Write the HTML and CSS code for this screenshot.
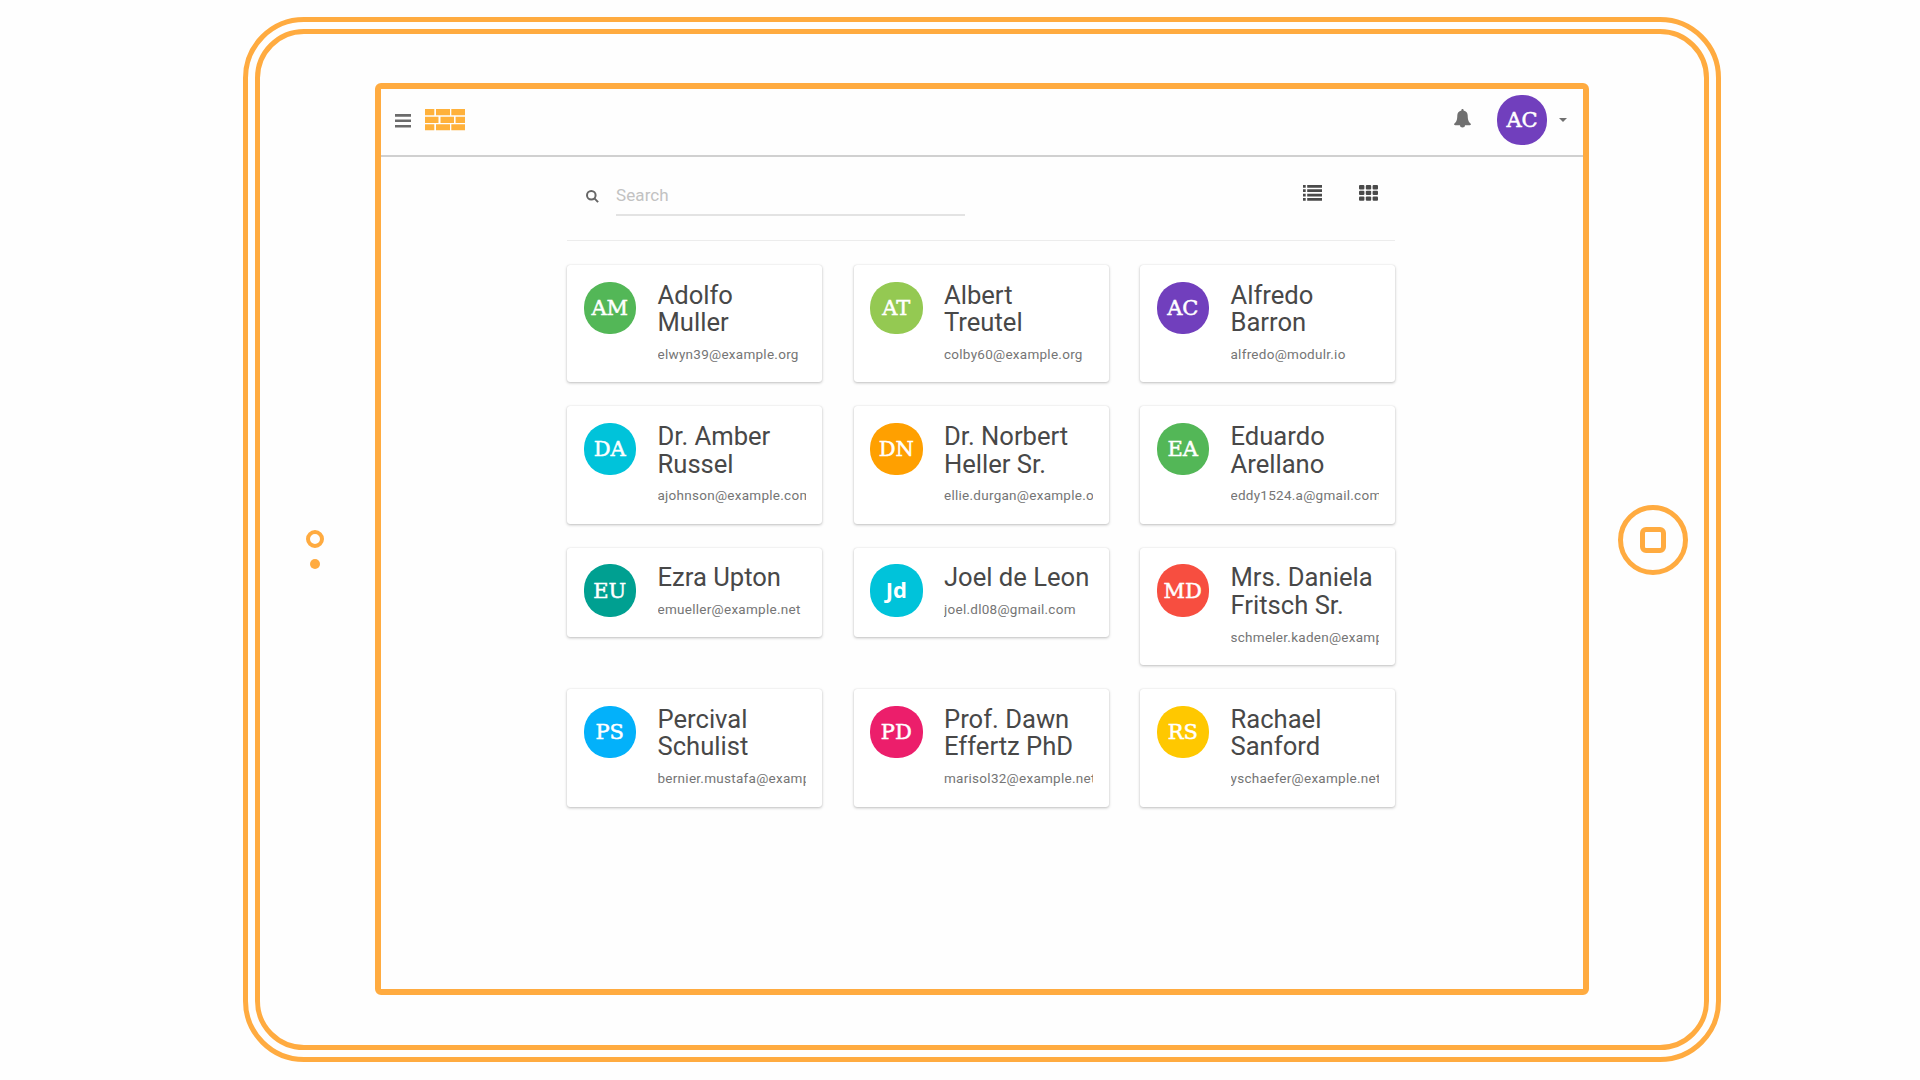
FILE: index.html
```
<!DOCTYPE html>
<html lang="en">
<head>
<meta charset="utf-8">
<title>Contacts</title>
<link rel="stylesheet" href="styles.css">
</head>
<body>
<div class="tablet">
  <div class="bezel">
    <div class="side sensors"><span class="camera"></span><span class="dot"></span></div>
    <main class="screen">
      <header class="topbar">
        <svg class="menu" viewBox="0 0 16 16"><path d="M0 2.400h16M0 7.800h16M0 13.300h16"/></svg>
        <svg class="logo" viewBox="0 0 40 22"><path d="M0 0h9.3v6.3H0zM11 0h14v6.3H11zM26.3 0H40v6.3H26.3zM0 7.7h13.5V14H0zM15.5 7.7H29V14H15.5zM30.6 7.7H40V14h-9.4zM0 15.3h9.3v6H0zM11 15.3h14v6H11zM26.3 15.3H40v6H26.3z"/></svg>
        <svg class="bell" viewBox="0 0 17 19"><path d="M8.500 0c.8 0 1.200.6 1.100 1.400 2.700.5 4.100 2.600 4.100 5.200 0 4.600 1 6.700 3.300 8.500 0 .7-.5 1.100-1.200 1.100h-4.800c0 1.300-1.100 2.300-2.500 2.300s-2.500-1-2.500-2.300H1.200C.5 16.200 0 15.800 0 15.100c2.300-1.800 3.300-3.900 3.300-8.500 0-2.600 1.400-4.700 4.100-5.200C7.300.6 7.700 0 8.500 0z"/></svg>
        <span class="avatar avatar-user purple">AC</span>
        <svg class="caret" viewBox="0 0 8 4"><path d="M0 0h8L4 4z"/></svg>
      </header>
      <section class="content">
        <div class="toolbar">
          <svg class="search-icon" viewBox="0 0 13 13"><circle cx="5.300" cy="5.300" r="4.300"/><path d="M8.400 8.400l3.700 3.700"/></svg>
          <div class="search">Search</div>
          <svg class="view list" viewBox="0 0 19 16"><path d="M0 0h2.700v2.700H0zM4.200 0H19v2.700H4.200zM0 4.300h2.700V7H0zM4.200 4.300H19V7H4.200zM0 8.700h2.700v2.700H0zM4.200 8.700H19v2.700H4.200zM0 13h2.700v2.700H0zM4.200 13H19v2.700H4.200z"/></svg>
          <svg class="view" viewBox="0 0 19 16"><g><rect width="5.400" height="4.400" rx="1"/><rect x="6.800" width="5.400" height="4.400" rx="1"/><rect x="13.600" width="5.400" height="4.400" rx="1"/><rect y="5.700" width="5.400" height="4.400" rx="1"/><rect x="6.800" y="5.700" width="5.400" height="4.400" rx="1"/><rect x="13.600" y="5.700" width="5.400" height="4.400" rx="1"/><rect y="11.400" width="5.400" height="4.400" rx="1"/><rect x="6.800" y="11.400" width="5.400" height="4.400" rx="1"/><rect x="13.600" y="11.400" width="5.400" height="4.400" rx="1"/></g></svg>
        </div>
        <div class="cards">
          <article class="card"><span class="avatar green">AM</span><div class="info"><h2>Adolfo<br>Muller</h2><p>elwyn39@example.org</p></div></article>
          <article class="card"><span class="avatar lime">AT</span><div class="info"><h2>Albert<br>Treutel</h2><p>colby60@example.org</p></div></article>
          <article class="card"><span class="avatar purple">AC</span><div class="info"><h2>Alfredo<br>Barron</h2><p>alfredo@modulr.io</p></div></article>
          <article class="card"><span class="avatar cyan">DA</span><div class="info"><h2>Dr. Amber<br>Russel</h2><p>ajohnson@example.com</p></div></article>
          <article class="card"><span class="avatar orange">DN</span><div class="info"><h2>Dr. Norbert<br>Heller Sr.</h2><p>ellie.durgan@example.o</p></div></article>
          <article class="card"><span class="avatar green">EA</span><div class="info"><h2>Eduardo<br>Arellano</h2><p>eddy1524.a@gmail.com</p></div></article>
          <article class="card"><span class="avatar teal">EU</span><div class="info"><h2>Ezra Upton</h2><p>emueller@example.net</p></div></article>
          <article class="card"><span class="avatar cyan sans">Jd</span><div class="info"><h2>Joel de Leon</h2><p>joel.dl08@gmail.com</p></div></article>
          <article class="card"><span class="avatar red">MD</span><div class="info"><h2>Mrs. Daniela<br>Fritsch Sr.</h2><p>schmeler.kaden@examp</p></div></article>
          <article class="card"><span class="avatar blue">PS</span><div class="info"><h2>Percival<br>Schulist</h2><p>bernier.mustafa@examp</p></div></article>
          <article class="card"><span class="avatar pink">PD</span><div class="info"><h2>Prof. Dawn<br>Effertz PhD</h2><p>marisol32@example.net</p></div></article>
          <article class="card"><span class="avatar yellow">RS</span><div class="info"><h2>Rachael<br>Sanford</h2><p>yschaefer@example.net</p></div></article>
        </div>
      </section>
    </main>
    <div class="side home"><span class="button"><span class="square"></span></span></div>
  </div>
</div>
</body>
</html>
```
FILE: styles.css
```
* { box-sizing: border-box; }
body { margin: 0; height: 1080px; overflow: hidden; background: #fefefe; font-family: Roboto, sans-serif; padding: 17px 199px 18px 243px; }
.tablet { height: 1045px; border: 5px solid #ffab40; border-radius: 61px; padding: 7px; }
.bezel { height: 1021px; border: 5px solid #ffab40; border-radius: 49px; display: flex; padding: 49px 0 0; }
.side { display: flex; flex-direction: column; align-items: center; }
.sensors { width: 115px; padding: 447px 5px 0 0; }
.camera { width: 18px; height: 18px; border: 4px solid #ffab40; border-radius: 50%; }
.dot { width: 10px; height: 10px; margin-top: 11px; border-radius: 50%; background: #ffab40; }
.screen { width: 1214px; height: 912px; border: 6px solid #ffab40; border-radius: 6px; background: #fefefe; }
.home { flex: 1; padding: 422px 0 0 13px; }
.button { width: 70px; height: 70px; border: 5px solid #ffab40; border-radius: 50%; display: flex; align-items: center; justify-content: center; }
.square { width: 26px; height: 26px; border: 5px solid #ffab40; border-radius: 6px; }

.topbar { height: 68px; border-bottom: 2px solid #d0d0d0; display: flex; align-items: center; padding: 0 16px 4px 14px; }
.menu { width: 16px; height: 16px; margin-top: 2px; stroke: #6b6b6b; stroke-width: 2.600; }
.logo { width: 40px; height: 22px; margin-left: 14px; fill: #ffb13b; }
.bell { width: 17px; height: 19px; margin-left: auto; margin-top: -3px; fill: #707070; }
.avatar { flex: none; width: 52.500px; height: 52.500px; border-radius: 25px; display: flex; align-items: center; justify-content: center; color: #fff; font: 21px "DejaVu Serif", serif; -webkit-text-stroke: .5px #fff; }
.avatar-user { width: 50px; height: 50px; border-radius: 24px; margin-left: 26px; }
.caret { width: 8px; height: 4px; margin-left: 12px; fill: #707070; }

.content { width: 828px; margin-left: 186px; }
.toolbar { height: 84px; border-bottom: 1px solid #ececec; display: flex; padding-left: 19px; }
.search-icon { width: 13px; height: 13px; margin-top: 33px; fill: none; stroke: #666; stroke-width: 2; }
.search { width: 349px; height: 59px; margin-left: 17px; padding-top: 25px; border-bottom: 2px solid #e3e3e3; color: #c2c2c2; font-size: 17px; line-height: 26px; letter-spacing: .1px; }
.view { width: 19px; height: 16px; margin: 28px 17px 0 0; fill: #4a4a4a; }
.list { margin-left: auto; margin-right: 37px; }
.cards { margin-top: 24px; display: grid; grid-template-columns: repeat(3, 255px); column-gap: 31.500px; row-gap: 24px; align-items: start; }
.card { display: flex; padding: 16.500px 16px 18.700px 16.500px; border-radius: 3px; background: #fff; box-shadow: 0 1px 3px rgba(0,0,0,.25), 0 0 1px rgba(0,0,0,.14); }
.info { flex: 1; min-width: 0; margin-left: 21.500px; }
h2 { margin: 0; color: #484848; font-weight: 400; font-size: 25.600px; line-height: 27.700px; white-space: nowrap; }
p { margin: 8px 0 0; padding-bottom: .8px; color: #757575; font-size: 13.500px; line-height: 18px; letter-spacing: .27px; white-space: nowrap; overflow: hidden; }
.sans { font: 700 22px "Open Sans", sans-serif; padding-bottom: 4px; -webkit-text-stroke: 0; }
.green { background: #53b757; }
.lime { background: #94c952; }
.purple { background: #713fbd; }
.cyan { background: #00c3da; }
.orange { background: #ffa000; }
.teal { background: #00a091; }
.red { background: #f74e40; }
.blue { background: #03b1fa; }
.pink { background: #ec1e6b; }
.yellow { background: #ffc800; }
```
